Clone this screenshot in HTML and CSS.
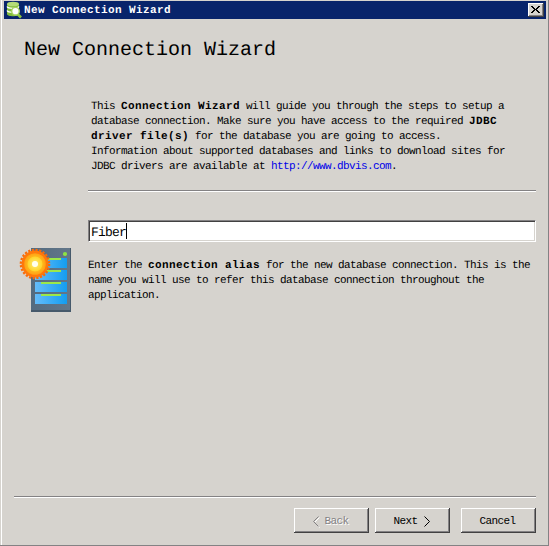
FILE: index.html
```html
<!DOCTYPE html>
<html lang="en">
<head>
<meta charset="utf-8">
<title>New Connection Wizard</title>
<link rel="stylesheet" href="styles.css">
</head>
<body>
<main class="window">
  <header class="titlebar">
    <svg class="app-icon" width="17" height="18" viewBox="0 0 17 18">
      <path d="M1 3v10c0 3 12 3 12 0V3z" fill="#83bd3c"/>
      <ellipse cx="7" cy="3" rx="6" ry="2.3" fill="#b4dc78"/>
      <path d="M1 5.5c1 2.4 11 2.4 12 0M1 9.5c1 2.4 11 2.4 12 0" fill="none" stroke="#fff" stroke-width="1.3"/>
      <path d="M11.5 13l3.5 3.5" stroke="#8cc63f" stroke-width="2.6"/>
      <circle cx="9.5" cy="10.2" r="3.8" fill="#fff" stroke="#a5d35d" stroke-width="1.4"/>
    </svg>
    <span class="caption">New Connection Wizard</span>
    <button class="close" aria-label="Close"><svg width="9" height="7" viewBox="0 0 9 7" shape-rendering="crispEdges"><path d="M0 0h2v1h1v1h1v1h1V2h1V1h1V0h2v1H8v1H7v1H6v1h1v1h1v1h1v1H7V6H6V5H5V4H4v1H3v1H2v1H0V6h1V5h1V4h1V3H2V2H1V1H0z"/></svg></button>
  </header>
  <h1>New Connection Wizard</h1>
  <section class="intro">
    <p>This <b>Connection Wizard</b> will guide you through the steps to setup a<br>database connection. Make sure you have access to the required <b>JDBC</b><br><b>driver file(s)</b> for the database you are going to access.<br>Information about supported databases and links to download sites for<br>JDBC drivers are available at <a>http://www.dbvis.com</a>.</p>
    <div class="rule"></div>
  </section>
  <section class="form">
    <svg class="server" width="54" height="66" viewBox="0 0 54 66">
      <defs>
        <linearGradient id="blue"><stop stop-color="#64bcfa"/><stop offset="1" stop-color="#139df0"/></linearGradient>
        <linearGradient id="case"><stop stop-color="#536b80"/><stop offset="1" stop-color="#647789"/></linearGradient>
        <radialGradient id="sun"><stop stop-color="#ffffe0"/><stop offset=".22" stop-color="#fff8b0"/><stop offset=".28" stop-color="#ffe45c"/><stop offset=".65" stop-color="#ffd52c"/><stop offset=".72" stop-color="#ffb51c"/><stop offset="1" stop-color="#ffa014"/></radialGradient>
      </defs>
      <rect x="12" y="1" width="40" height="64" fill="url(#case)"/>
      <path d="M12 63h40v2H12zM51 1h1v64h-1z" fill="#46596b"/>
      <circle cx="46" cy="7" r="2.1" fill="#8ee344"/>
      <path d="M16 11h32v10H16zM16 23h32v10H16zM16 35h32v10H16zM16 47h32v10H16z" fill="url(#blue)"/>
      <path d="M22 11h20v2H22zM22 23h20v2H22zM22 35h20v2H22zM22 47h20v2H22z" fill="#9be84a"/>
      <circle cx="16" cy="17" r="13.4" fill="#ff780a"/>
      <circle cx="16" cy="17" r="14.2" fill="none" stroke="#f76b0a" stroke-width="2.2" stroke-dasharray="2.2 1.52"/>
      <circle cx="16" cy="17" r="10.8" fill="url(#sun)"/>
      <circle cx="16" cy="17" r="3" fill="#fffff0"/>
    </svg>
    <div class="fields">
      <div class="input"><span>Fiber</span><i class="caret"></i></div>
      <p>Enter the <b>connection alias</b> for the new database connection. This is the<br>name you will use to refer this database connection throughout the<br>application.</p>
    </div>
  </section>
  <footer>
    <div class="rule"></div>
    <div class="buttons">
      <button class="btn disabled"><svg width="6" height="11" viewBox="0 0 6 11"><path d="M5.5.5l-5 5 5 5"/></svg>Back</button>
      <button class="btn">Next<svg width="6" height="11" viewBox="0 0 6 11"><path d="M.5.5l5 5-5 5"/></svg></button>
      <button class="btn cancel">Cancel</button>
    </div>
  </footer>
</main>
</body>
</html>
```
FILE: styles.css
```css
* { box-sizing: border-box; }
body { margin: 0; background: #d6d3ce; }
.window {
  display: flex;
  flex-direction: column;
  width: 549px;
  height: 546px;
  padding-top: 1px;
  border-right: 1px solid #848284;
  border-bottom: 1px solid #848284;
  box-shadow: inset 1px 0 #d6d3ce, inset 2px 0 #fff;
  color: #000;
  font: 11px/15px "Liberation Mono", monospace;
  letter-spacing: -0.6016px;
  text-rendering: geometricPrecision;
  white-space: nowrap;
}
b { letter-spacing: 0.3984px; }
p { margin: 0; }
h1 {
  margin: 19px 0 0 24px;
  font-size: 20px;
  line-height: 26px;
  font-weight: 400;
  letter-spacing: 0;
}
.titlebar {
  display: flex;
  align-items: center;
  height: 18px;
  margin: 0 2px 0 4px;
  background: #08246b;
  color: #fff;
}
.app-icon { margin-left: 2px; }
.caption {
  flex: 1;
  margin-left: 1px;
  padding-top: 3px;
  font-weight: 700;
  letter-spacing: 0.3984px;
}
.close {
  display: grid;
  place-items: center;
  width: 16px;
  height: 14px;
  margin-right: 2px;
  padding: 0 1px 1px 0;
  border: 0;
  background: #d6d3ce;
  box-shadow: inset -1px -1px #424142, inset 1px 1px #fff, inset -2px -2px #848284;
}
.intro { margin: 36px 12px 0 88px; }
.intro p { padding-left: 3px; }
.intro .rule { margin-top: 15px; }
.rule { height: 2px; background: #848284; border-bottom: 1px solid #fff; }
a { color: #0000e8; }
.form { display: flex; margin: 28px 12px 0 19px; }
.server { flex: none; margin-top: 27px; }
.fields { flex: 1; margin-left: 15px; }
.input {
  display: flex;
  align-items: center;
  height: 22px;
  padding: 0 2px;
  background: #fff;
  border: 1px solid;
  border-color: #848284 #fff #fff #848284;
  box-shadow: inset 1px 1px #424142, inset -1px -1px #d6d3ce;
  font-size: 13px;
  letter-spacing: -0.8px;
}
.input span { padding-top: 2px; }
.caret { width: 1px; height: 16px; background: #000; }
.fields p { margin-top: 17px; }
footer { margin: auto 12px 12px 14px; }
.buttons { display: flex; justify-content: flex-end; gap: 6px; margin-top: 10px; }
.btn {
  display: flex;
  align-items: center;
  justify-content: center;
  gap: 6px;
  width: 75px;
  height: 25px;
  padding: 2px 2px 0 0;
  border: 0;
  background: #d6d3ce;
  box-shadow: inset -1px -1px #424142, inset 1px 1px #fff, inset -2px -2px #848284;
  color: #000;
  font: inherit;
  letter-spacing: -0.6016px;
}
.btn path { fill: none; stroke: currentColor; }
.disabled { color: #848284; text-shadow: 1px 1px #fff; }
.disabled svg { filter: drop-shadow(1px 1px 0 #fff); }
.cancel { margin-left: 5px; }
```
